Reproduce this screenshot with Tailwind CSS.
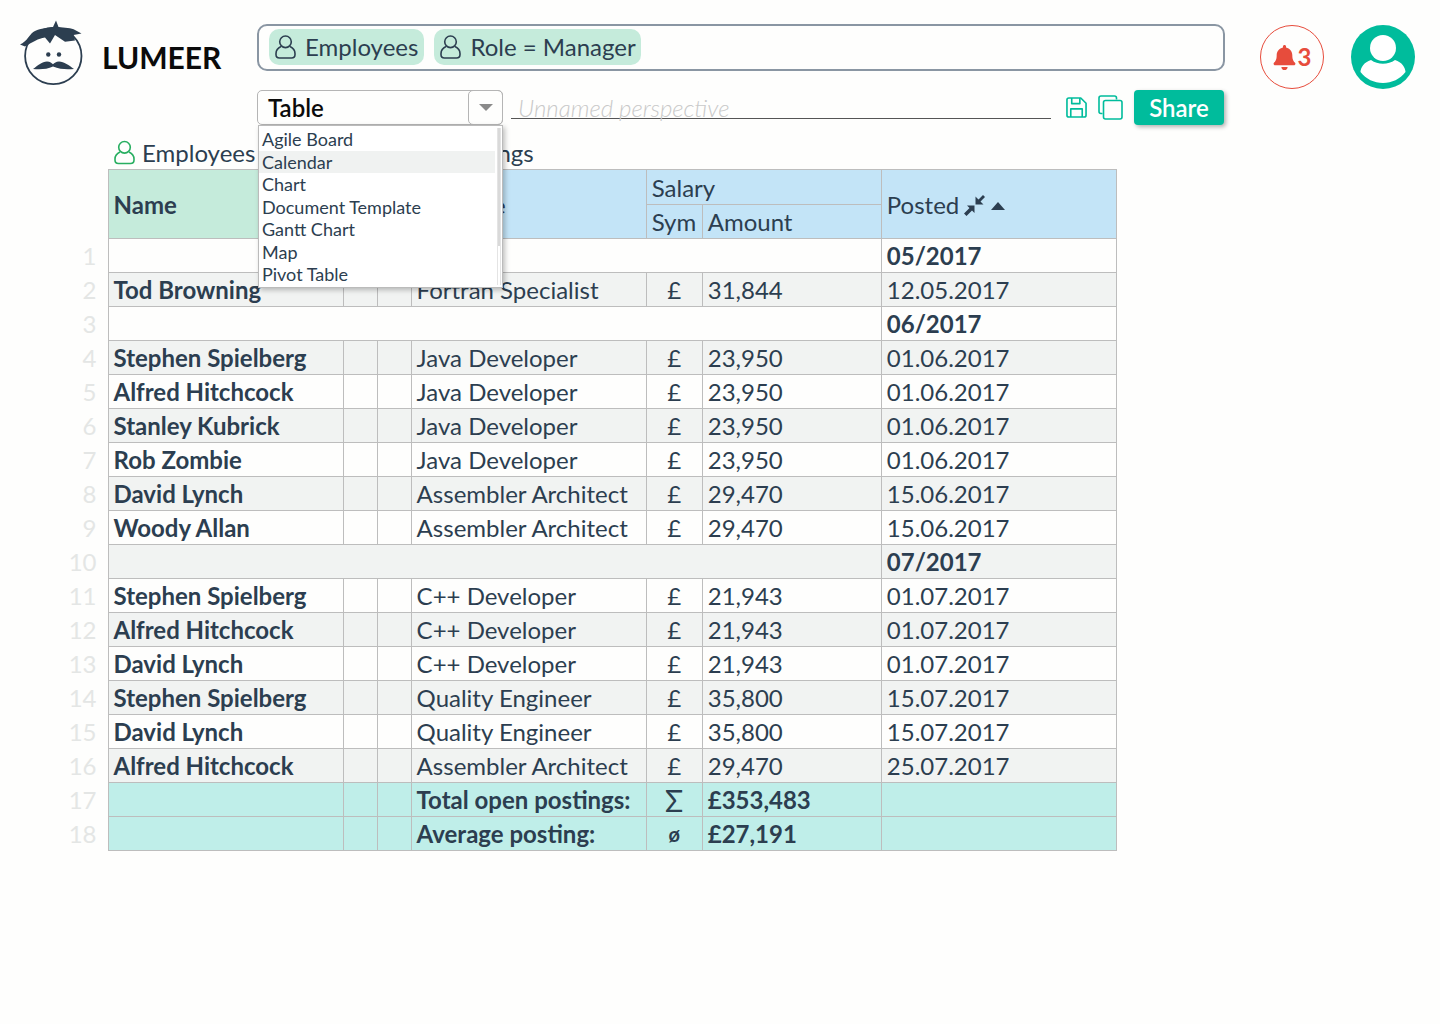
<!DOCTYPE html>
<html lang="en">
<head>
    <meta charset="UTF-8">
    <title>Lumeer</title>
    <script src="https://cdn.jsdelivr.net/npm/@tailwindcss/browser@4"></script>
</head>
<body class="bg-[#fefefd] font-['Lato',sans-serif] text-[#2c3e50] text-[24px] w-[1440px] h-[1024px] overflow-hidden">
    <!-- Top bar -->
    <div class="flex items-start pt-[18px] pl-[20px] h-[90px]">
        <svg class="w-[64px] h-[70px] shrink-0" viewBox="20 18 64 70">
            <circle cx="53.3" cy="56" r="28.2" fill="none" stroke="#2c3e50" stroke-width="1.8"/>
            <path d="M20 44.5C27 42 30 33 35 31C41 28 48 28 53 27L56 20.5L58.5 27C64 27.5 72 28 75 30L81.5 33.5L73.5 35L75 40.500L65 41.700L55 35L50 43.500L45 37.500C38 38.500 33 42 25 46.500Z" fill="#2c3e50"/>
            <circle cx="48.300" cy="54.500" r="2.200" fill="#2c3e50"/>
            <circle cx="59" cy="54.500" r="2.200" fill="#2c3e50"/>
            <path d="M33 69C38 65.500 42 61.500 47 61.500C50 61.500 52 63.500 53 64.300C54.500 63 56 61.500 59 61.500C64 61.500 69 65.500 74 69C67 69.500 60 69.500 53 66.500C47 69.500 40 69.500 33 69Z" fill="#2c3e50"/>
        </svg>
        <div class="ml-[18px] mt-[19px] w-[119px] text-[30px] leading-[40px] font-bold text-[#0b0b0b]">LUMEER</div>
        <div class="ml-[36px] mt-[6px] w-[968px] h-[47px] border-2 border-[#8a96a3] rounded-[10px] flex items-center gap-[10px] pl-[10px] pb-[1px]">
            <div class="flex items-center h-[36px] bg-[#c5ebdb] rounded-[10px] pl-[6px] pr-[6px] gap-[9px]">
                <svg class="w-[21px] h-[24px]" viewBox="0 0 21 24" fill="none" stroke="#2c3e50" stroke-width="1.600"><circle cx="10.500" cy="6.800" r="5.800"/><path d="M6 11.500C2.800 13 1 15.500 1 18.500V19.500C1 21.500 2.500 23 4.500 23H16.500C18.500 23 20 21.500 20 19.500V18.500C20 15.500 18.200 13 15 11.500"/></svg>
                <span>Employees</span>
            </div>
            <div class="flex items-center h-[36px] bg-[#c5ebdb] rounded-[10px] pl-[6px] pr-[5px] gap-[9px]">
                <svg class="w-[21px] h-[24px]" viewBox="0 0 21 24" fill="none" stroke="#2c3e50" stroke-width="1.600"><circle cx="10.500" cy="6.800" r="5.800"/><path d="M6 11.500C2.800 13 1 15.500 1 18.500V19.500C1 21.500 2.500 23 4.500 23H16.500C18.500 23 20 21.500 20 19.500V18.500C20 15.500 18.200 13 15 11.500"/></svg>
                <span>Role = Manager</span>
            </div>
        </div>
        <div class="ml-[35px] mt-[7px] w-[64px] h-[64px] rounded-full border border-[#e74c3c] flex items-center justify-center gap-[2px] text-[#e74c3c] font-bold">
            <svg class="w-[23px] h-[25px]" viewBox="0 0 448 512" fill="#e74c3c"><path d="M224 512c35.32 0 63.97-28.65 63.97-64H160.03c0 35.35 28.65 64 63.97 64zm215.39-149.71c-19.32-20.76-55.47-51.99-55.47-154.29 0-77.7-54.48-139.9-127.94-155.16V32c0-17.67-14.32-32-31.98-32s-31.98 14.33-31.98 32v20.84C118.56 68.1 64.08 130.3 64.08 208c0 102.3-36.15 133.53-55.47 154.29-6 6.45-8.66 14.16-8.61 21.71.11 16.4 12.98 32 32.1 32h383.8c19.12 0 32-15.6 32.1-32 .05-7.55-2.61-15.27-8.61-21.71z"/></svg>
            <span>3</span>
        </div>
        <svg class="ml-[27px] mt-[7px] w-[64px] h-[64px]" viewBox="0 0 64 64">
            <circle cx="32" cy="32" r="32" fill="#00bc9c"/>
            <circle cx="32" cy="23" r="13" fill="#fff"/>
            <path d="M20 35C13 37 9.500 43 9.500 47C15 54 23 58 32 58C41 58 49 54 54.500 47C54.500 43 51 37 44 35C37 40 27 40 20 35Z" fill="#fff"/>
        </svg>
    </div>

    <!-- Perspective bar -->
    <div class="flex items-start pl-[257px] h-[40px]">
        <div class="relative w-[246px] h-[35px] border border-[#b5b5b5] rounded-[5px] flex items-center justify-between">
            <span class="pl-[10px] font-semibold text-[#0b0b0b]">Table</span>
            <div class="w-[35px] h-[35px] -mr-[1px] border border-[#b5b5b5] rounded-[5px] flex items-center justify-center">
                <div class="w-0 h-0 border-x-[7px] border-x-transparent border-t-[7px] border-t-[#8a8a8a]"></div>
            </div>
            <!-- open dropdown -->
            <div class="absolute z-10 left-0 top-[34px] w-[245px] h-[163px] bg-white border border-[#bbbbbb] shadow-[2px_2px_5px_rgba(0,0,0,0.25)] pt-[2px] text-[18px] leading-[22.5px] flex">
                <div class="w-[236px]">
                    <div class="px-[3px]">Agile Board</div>
                    <div class="px-[3px] bg-[#f0f2f1]">Calendar</div>
                    <div class="px-[3px]">Chart</div>
                    <div class="px-[3px]">Document Template</div>
                    <div class="px-[3px]">Gantt Chart</div>
                    <div class="px-[3px]">Map</div>
                    <div class="px-[3px]">Pivot Table</div>
                </div>
                <div class="ml-[2px] w-[4px] h-[157px] border-x border-[#e4e4e4]">
                    <div class="h-[118px] bg-[#d9d9d9]"></div>
                </div>
            </div>
        </div>
        <div class="ml-[8px] w-[540px] h-[29px] border-b border-[#555555] pl-[7px] font-light italic text-[#c9c9c9] leading-[36px]">Unnamed perspective</div>
        <svg class="ml-[15px] mt-[7px] w-[21px] h-[21px]" viewBox="0 0 22 22" fill="none" stroke="#00bc9c" stroke-width="1.700" stroke-linejoin="round"><path d="M1 3C1 2 2 1 3 1H15.500L21 6.500V19C21 20 20 21 19 21H3C2 21 1 20 1 19Z"/><path d="M6 1V7H14.500V1"/><path d="M5 21V12.500H17V21"/></svg>
        <svg class="ml-[11px] mt-[5px] w-[25px] h-[25px]" viewBox="0 0 25 25" fill="none" stroke="#00bc9c" stroke-width="1.600"><path d="M4.500 18.500H3C2 18.500 1 17.500 1 16.500V3C1 2 2 1 3 1H16.500C17.500 1 18.500 2 18.500 3V4.500"/><rect x="5.500" y="5.500" width="18.500" height="18.500" rx="2"/></svg>
        <div class="ml-[11px] w-[90px] h-[35px] bg-[#00bc9c] rounded-[4px] shadow-[2px_2px_4px_rgba(0,0,0,0.3)] text-white font-semibold flex items-center justify-center">Share</div>
    </div>

    <!-- Table captions -->
    <div class="flex items-center pl-[114px] h-[39px] pt-[6px]">
        <svg class="w-[21px] h-[25px]" viewBox="0 0 21 24" fill="none" stroke="#27ae60" stroke-width="1.600"><circle cx="10.500" cy="6.800" r="5.800"/><path d="M6 11.500C2.800 13 1 15.500 1 18.500V19.500C1 21.500 2.500 23 4.500 23H16.500C18.500 23 20 21.500 20 19.500V18.500C20 15.500 18.200 13 15 11.500"/></svg>
        <span class="ml-[7px] w-[240px]">Employees</span>
        <span class="ml-[20px]">Job Postings</span>
    </div>

    <!-- Table -->
    <table class="table-fixed border-collapse w-[1057px] ml-[60px] leading-[24px] [&_td]:px-[5px] [&_td]:pt-[1px] [&_td]:align-middle">
        <colgroup>
            <col class="w-[48px]"><col class="w-[235px]"><col class="w-[34px]"><col class="w-[34px]"><col class="w-[235px]"><col class="w-[56px]"><col class="w-[179px]"><col class="w-[235px]">
        </colgroup>
        <thead class="[&_td]:border [&_td]:border-[#bdbdbd] [&_td]:bg-[#c3e4f7]">
            <tr class="h-[35px]">
                <td class="border-none! bg-transparent!" rowspan="2"></td>
                <td class="bg-[#c5ebdb]! font-bold" rowspan="2">Name</td>
                <td class="bg-[#c5ebdb]!" rowspan="2"></td>
                <td rowspan="2"></td>
                <td rowspan="2">Job Title</td>
                <td colspan="2">Salary</td>
                <td rowspan="2">
                    <div class="flex items-center">
                        <span>Posted</span>
                        <svg class="ml-[5px] mt-[1px] w-[21px] h-[21px]" viewBox="0 0 21 21" fill="#2c3e50"><path d="M19 0L21 2L16.500 6.500L19.500 9.500H11.500V1.500L14.500 4.500Z"/><path d="M2.500 21L0 18.500L5.500 13L3 10.500H10.500V18L8 15.500Z"/></svg>
                        <div class="ml-[6px] mt-[3px] w-0 h-0 border-x-[7px] border-x-transparent border-b-[8px] border-b-[#2c3e50]"></div>
                    </div>
                </td>
            </tr>
            <tr class="h-[34px]">
                <td>Sym</td>
                <td>Amount</td>
            </tr>
        </thead>
        <tbody class="[&_tr]:h-[34px] [&_tr:nth-child(even)]:bg-[#f1f3f2] [&_td:not(:first-child)]:border [&_td:not(:first-child)]:border-[#bdbdbd] [&_td:nth-child(2)]:font-bold [&_td:first-child]:text-right [&_td:first-child]:text-[#e4e6e5] [&_td:first-child]:pr-[11px] [&_td:first-child]:bg-[#fefefd] [&_td:nth-child(6)]:text-center">
            <tr><td>1</td><td colspan="6"></td><td class="font-bold">05/2017</td></tr>
            <tr><td>2</td><td>Tod Browning</td><td></td><td></td><td>Fortran Specialist</td><td>£</td><td>31,844</td><td>12.05.2017</td></tr>
            <tr><td>3</td><td colspan="6"></td><td class="font-bold">06/2017</td></tr>
            <tr><td>4</td><td>Stephen Spielberg</td><td></td><td></td><td>Java Developer</td><td>£</td><td>23,950</td><td>01.06.2017</td></tr>
            <tr><td>5</td><td>Alfred Hitchcock</td><td></td><td></td><td>Java Developer</td><td>£</td><td>23,950</td><td>01.06.2017</td></tr>
            <tr><td>6</td><td>Stanley Kubrick</td><td></td><td></td><td>Java Developer</td><td>£</td><td>23,950</td><td>01.06.2017</td></tr>
            <tr><td>7</td><td>Rob Zombie</td><td></td><td></td><td>Java Developer</td><td>£</td><td>23,950</td><td>01.06.2017</td></tr>
            <tr><td>8</td><td>David Lynch</td><td></td><td></td><td>Assembler Architect</td><td>£</td><td>29,470</td><td>15.06.2017</td></tr>
            <tr><td>9</td><td>Woody Allan</td><td></td><td></td><td>Assembler Architect</td><td>£</td><td>29,470</td><td>15.06.2017</td></tr>
            <tr><td>10</td><td colspan="6"></td><td class="font-bold">07/2017</td></tr>
            <tr><td>11</td><td>Stephen Spielberg</td><td></td><td></td><td>C++ Developer</td><td>£</td><td>21,943</td><td>01.07.2017</td></tr>
            <tr><td>12</td><td>Alfred Hitchcock</td><td></td><td></td><td>C++ Developer</td><td>£</td><td>21,943</td><td>01.07.2017</td></tr>
            <tr><td>13</td><td>David Lynch</td><td></td><td></td><td>C++ Developer</td><td>£</td><td>21,943</td><td>01.07.2017</td></tr>
            <tr><td>14</td><td>Stephen Spielberg</td><td></td><td></td><td>Quality Engineer</td><td>£</td><td>35,800</td><td>15.07.2017</td></tr>
            <tr><td>15</td><td>David Lynch</td><td></td><td></td><td>Quality Engineer</td><td>£</td><td>35,800</td><td>15.07.2017</td></tr>
            <tr><td>16</td><td>Alfred Hitchcock</td><td></td><td></td><td>Assembler Architect</td><td>£</td><td>29,470</td><td>25.07.2017</td></tr>
            <tr class="bg-[#bfeee9]!"><td>17</td><td></td><td></td><td></td><td class="font-bold">Total open postings:</td><td class="text-[30px]">Σ</td><td class="font-bold">£353,483</td><td></td></tr>
            <tr class="bg-[#bfeee9]!"><td>18</td><td></td><td></td><td></td><td class="font-bold">Average posting:</td><td class="font-bold text-[20px]">ø</td><td class="font-bold">£27,191</td><td></td></tr>
        </tbody>
    </table>
</body>
</html>
